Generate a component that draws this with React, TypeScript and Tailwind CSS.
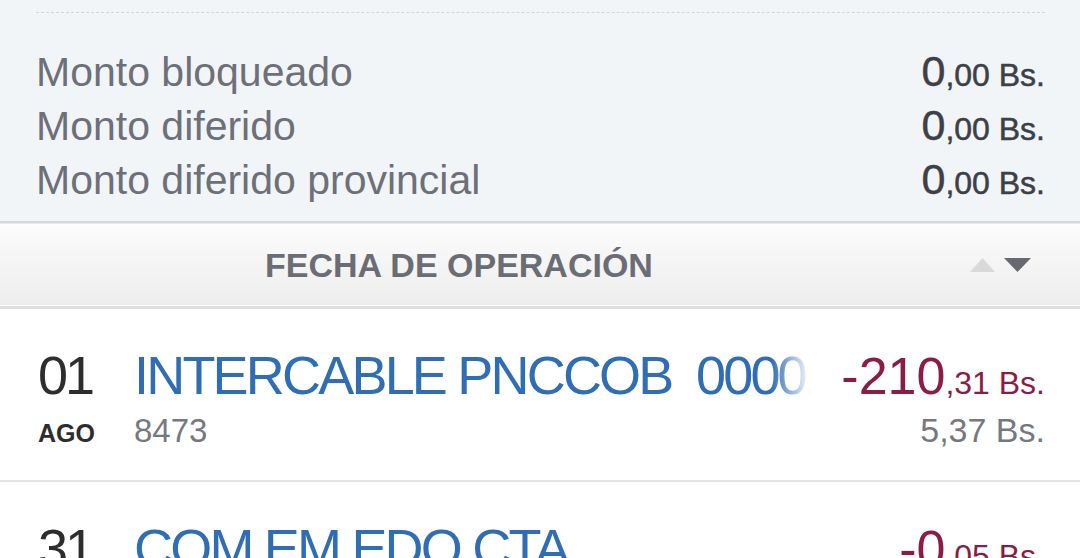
const balances = [
  { label: 'Monto bloqueado', int: '0', dec: ',00 Bs.' },
  { label: 'Monto diferido', int: '0', dec: ',00 Bs.' },
  { label: 'Monto diferido provincial', int: '0', dec: ',00 Bs.' },
];

const movements = [
  {
    day: '01',
    month: 'AGO',
    title: 'INTERCABLE PNCCOB  00001234',
    ref: '8473',
    int: '-210',
    dec: ',31 Bs.',
    balance: '5,37 Bs.',
  },
  {
    day: '31',
    month: 'JUL',
    title: 'COM EM EDO CTA',
    ref: '8473',
    int: '-0',
    dec: ',05 Bs.',
    balance: '215,68 Bs.',
  },
];

function SortArrows() {
  return (
    <svg width="61" height="16" viewBox="0 0 61 16">
      <polygon points="0,15 25,15 12.5,1" fill="#d9d9d9" />
      <polygon points="34,1 61,1 47.5,15" fill="#66696f" />
    </svg>
  );
}

export default function App() {
  return (
    <div className="h-[558px] w-[1080px] overflow-hidden bg-white font-['Liberation_Sans',Arial,sans-serif]">
      {/* Account summary */}
      <section className="border-b-2 border-[#d4d7da] bg-[#f2f5f8] px-[35px] pt-[12px] pb-[15px]">
        <div className="ml-px border-t border-dashed border-[#d3d7dc]" />
        <div className="mt-[31px]">
          {balances.map((b) => (
            <div key={b.label} className="flex h-[54px] items-baseline justify-between">
              <span className="pl-px text-[41px] leading-[54px] text-[#6d7078]">{b.label}</span>
              <span className="text-[43px] leading-[54px] text-[#3d4047] [-webkit-text-stroke:0.5px_#3d4047]">
                {b.int}
                <span className="text-[32px]">{b.dec}</span>
              </span>
            </div>
          ))}
        </div>
      </section>

      {/* Sort header */}
      <div className="flex h-[82px] items-center border-t border-[#e9e9e9] bg-gradient-to-b from-[#fcfcfc] to-[#ededed]">
        <div className="flex flex-1 justify-center">
          <span className="text-[34px] font-bold leading-none text-[#6a6d73]">FECHA DE OPERACIÓN</span>
        </div>
        <div className="flex w-[162px] justify-end pr-[49px]">
          <SortArrows />
        </div>
      </div>
      <div className="h-px bg-white" />
      <div className="h-[3px] bg-[#dedede]" />

      {/* Movements */}
      {movements.map((m) => (
        <div key={m.day + m.title} className="border-b-2 border-[#e4e4e4] pl-[38px] pr-[35px] pt-[39px] pb-[33px]">
          <div className="flex items-start text-[54px] leading-none">
            <span className="w-[96px] shrink-0 tracking-[-3px] text-[#2d2d2d]">{m.day}</span>
            <span className="min-w-0 flex-1 overflow-hidden whitespace-pre tracking-[-2.8px] text-[#2f6db5] [mask-image:linear-gradient(to_right,#000_calc(100%-40px),transparent)]">
              {m.title}
            </span>
            <span className="ml-[30px] shrink-0 text-[#8b1c45]">
              <span className="text-[52px]">{m.int}</span>
              <span className="text-[32px]">{m.dec}</span>
            </span>
          </div>
          <div className="mt-[11px] flex items-baseline leading-none">
            <span className="w-[96px] shrink-0 text-[25px] font-bold text-[#2d2d2d]">{m.month}</span>
            <span className="flex-1 text-[33px] text-[#76787e]">{m.ref}</span>
            <span className="text-[34px] text-[#76787e]">{m.balance}</span>
          </div>
        </div>
      ))}
    </div>
  );
}
